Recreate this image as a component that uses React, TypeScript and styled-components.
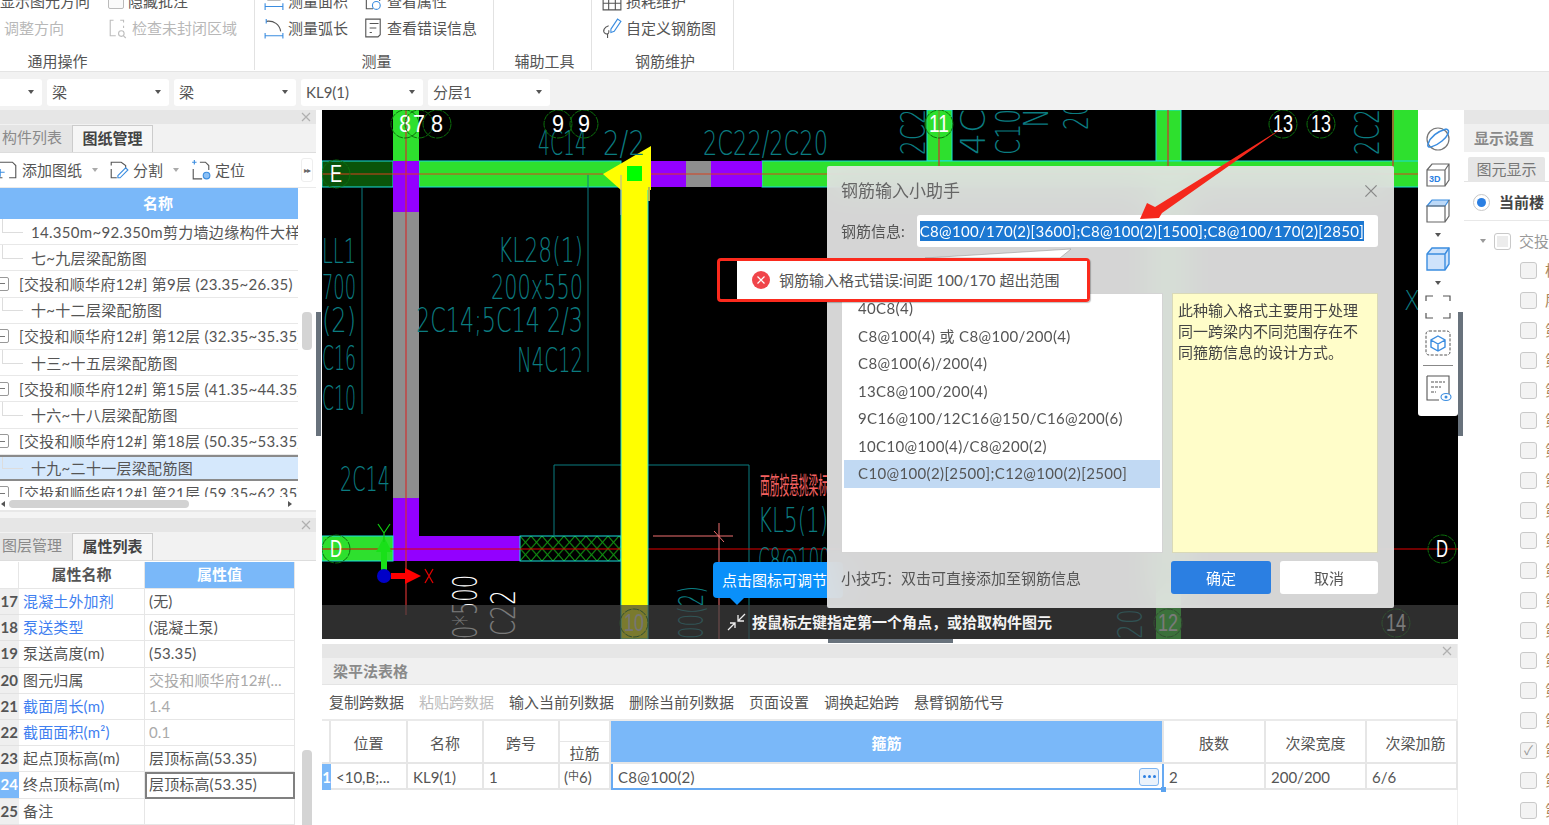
import React from "react";
import styled, { createGlobalStyle } from "styled-components";

const FONT = `"Lato", "Noto Sans CJK SC", "Noto Sans", sans-serif`;
const TEAL = "#0b7c80";
const GREEN = "#2ee02e";
const PURPLE = "#9300ff";
const CYAN = "#19dede";
const BLUE_HEAD = "#7ab8f9";
const LINE = "#e6e6e6";

const Global = createGlobalStyle`
  html, body { margin: 0; padding: 0; background: #f4f4f4; overflow: hidden; }
  * { box-sizing: border-box; }
  body { font: 15px/20px ${FONT}; color: #555; }
`;

const Page = styled.div`
  width: 1549px; height: 825px; overflow: hidden;
  display: flex; flex-direction: column; background: #f4f4f4;
  filter: blur(0.45px);
`;

/* ---------- ribbon ---------- */
const Ribbon = styled.header`
  height: 72px; flex: none; display: flex; background: #fff; overflow: hidden;
  border-bottom: 1px solid #e4e4e4;
`;
const Group = styled.section<{ $w: number }>`
  width: ${p => p.$w}px; flex: none; height: 70px;
  display: flex; flex-direction: column; border-right: 1px solid #e2e2e2;
`;
const GroupBody = styled.div`height: 51px; display: flex; margin-top: -11px; flex: none;`;
const GroupLabel = styled.div<{ $pl?: number; $pr?: number }>`
  height: 20px; margin-top: 11px; text-align: center; line-height: 20px; flex: none;
  padding: 0 ${p => p.$pr ?? 0}px 0 ${p => p.$pl ?? 0}px;
`;
const ToolCol = styled.div<{ $w?: number; $pl?: number }>`
  display: flex; flex-direction: column; gap: 3px; flex: none;
  width: ${p => (p.$w ? `${p.$w}px` : "auto")};
  padding-left: ${p => p.$pl ?? 0}px;
`;
const ToolItem = styled.div<{ $off?: boolean; $pl?: number }>`
  height: 24px; display: flex; align-items: center; gap: 4px; white-space: nowrap;
  color: ${p => (p.$off ? "#b8b8b8" : "#555")};
  padding-left: ${p => p.$pl ?? 0}px;
`;
const IconBox = styled.svg`width: 20px; height: 20px; flex: none; display: block; overflow: visible;`;
const Tick = styled.span`
  width: 16px; height: 16px; flex: none; border: 1px solid #bbb; border-radius: 2px; background: #fafafa;
`;

/* ---------- combo bar ---------- */
const ComboBar = styled.div`height: 38px; flex: none; display: flex; gap: 5px; padding-top: 7px; background: #f2f2f2;`;
const Combo = styled.div<{ $clip?: boolean }>`
  width: 122px; height: 27px; flex: none; background: #fff; border-radius: 3px;
  display: flex; align-items: center; justify-content: space-between; padding: 0 8px 2px 5px;
  margin-left: ${p => (p.$clip ? "-80px" : "0")};
`;
const Caret = styled.i<{ $c?: string; $ml?: number }>`
  width: 0; height: 0; display: block; flex: none;
  border-left: 3px solid transparent; border-right: 3px solid transparent;
  border-top: 4px solid ${p => p.$c ?? "#555"};
  margin-left: ${p => p.$ml ?? 0}px;
`;

/* ---------- main ---------- */
const Main = styled.main`flex: 1; min-height: 0; display: flex;`;
const LeftCol = styled.aside`width: 316px; flex: none; display: flex; flex-direction: column;`;
const Splitter = styled.div`width: 6px; flex: none; background: #fff; padding-top: 202px;`;
const SplitHandle = styled.div`width: 5px; height: 124px; background: #68727c;`;
const Center = styled.div`width: 1136px; flex: none; display: flex; flex-direction: column;`;

const Strip = styled.div`
  height: 14px; flex: none; background: #e6e6e6; display: flex; align-items: center; justify-content: flex-end;
  padding-right: 5px;
`;
const CloseMark = styled.svg`width: 10px; height: 10px; display: block;`;
const Close = ({ c = "#b0b0b0" }: { c?: string }) => (
  <CloseMark viewBox="0 0 10 10"><path d="M1 1l8 8M9 1l-8 8" stroke={c} strokeWidth="1.2" fill="none" /></CloseMark>
);

const TabRow = styled.div`height: 29px; flex: none; display: flex; background: #f2f2f2; border-bottom: 1px solid #ddd; padding-top: 1px;`;
const Tab = styled.div<{ $on?: boolean; $w: number }>`
  width: ${p => p.$w}px; text-align: center; line-height: 25px; flex: none;
  padding-right: ${p => (p.$on ? 0 : 8)}px;
  background: ${p => (p.$on ? "#f6f6f6" : "#e5e5e5")};
  color: ${p => (p.$on ? "#444" : "#8a8a8a")};
  font-weight: ${p => (p.$on ? 700 : 400)};
  border-right: 1px solid #ccc;
  border-top: ${p => (p.$on ? "1px solid #ccc" : "0")};
`;

const TreePanel = styled.section`height: 402px; flex: none; background: #fff; display: flex; flex-direction: column; border-bottom: 2px solid #e8e8e8;`;
const SideTools = styled.div`height: 35px; flex: none; display: flex; align-items: center; border-bottom: 1px solid #eaeaea; position: relative; padding-left: 0; overflow: hidden;`;
const SideTool = styled.div<{ $ml?: number }>`
  display: flex; align-items: center; gap: 4px; margin-left: ${p => p.$ml ?? 0}px; flex: none;
`;
const MoreBtn = styled.div`
  position: absolute; right: 3px; top: 5px; width: 12px; height: 24px; border: 1px solid #eee; border-radius: 3px;
  font-size: 8px; line-height: 22px; text-align: center; color: #666; background: #fff; letter-spacing: -1px;
`;
const TreeBody = styled.div`flex: 1; min-height: 0; display: flex; position: relative;`;
const TreeTable = styled.div`width: 298px; flex: none; overflow: hidden; height: 309px; white-space: nowrap;`;
const TreeHead = styled.div`height: 31px; background: ${BLUE_HEAD}; color: #fff; text-align: center; line-height: 30px; font-weight: 700; padding-left: 18px;`;
const TreeRow = styled.div<{ $sel?: boolean; $child?: boolean }>`
  height: 26.2px; display: flex; align-items: center; overflow: hidden; letter-spacing: .3px;
  border-bottom: ${p => (p.$sel ? "2px solid #8a8a8a" : "1px solid #e8e8e8")};
  border-top: ${p => (p.$sel ? "2px solid #8a8a8a" : "0")};
  background: ${p => (p.$sel ? "#d5e8fc" : "#fff")};
`;
const Expander = styled.span`
  width: 14px; height: 14px; margin-left: -5px; margin-right: 10px; flex: none; border: 1px solid #999; border-radius: 2px;
  background: #fff; position: relative; display: flex; align-items: center; justify-content: flex-end; padding-right: 3px;
  &::after { content: ""; width: 6px; height: 1px; background: #777; display: block; }
`;
const Connector = styled.span`
  width: 21px; height: 14px; margin: -12px 8px 0 2px; flex: none;
  border-left: 1px solid #ddd; border-bottom: 1px solid #ddd;
`;
const VScroll = styled.div<{ $top: number; $h: number }>`
  position: absolute; left: 302px; top: ${p => p.$top}px; width: 10px; height: ${p => p.$h}px;
  background: #d4d4d4; border-radius: 4px;
`;
const HScroll = styled.div`height: 13px; display: flex; align-items: center; padding-left: 1px; flex: none;`;
const HThumb = styled.div`width: 180px; height: 8px; background: #d2d2d2; border-radius: 4px; margin: 0 99px 0 4px;`;
const ArrowL = styled.i`width: 0; height: 0; border: 3px solid transparent; border-left: 0; border-right: 4px solid #555; display: block;`;
const ArrowR = styled.i`width: 0; height: 0; border: 3px solid transparent; border-right: 0; border-left: 4px solid #555; display: block;`;

const Gap = styled.div`height: 6px; flex: none; background: #f4f4f4;`;

const PropPanel = styled.section`flex: 1; min-height: 0; background: #fff; position: relative; display: flex; flex-direction: column; overflow: hidden;`;
const PropGrid = styled.div`display: grid; grid-template-columns: 19px 126px 150px; grid-template-rows: 27px; grid-auto-rows: 26.2px; width: 295px; margin-top: 1px;`;
const PropHead = styled.div<{ $on?: boolean }>`
  text-align: center; line-height: 25px; border-bottom: 1px solid #e6e6e6; border-right: 1px solid #e6e6e6;
  background: ${p => (p.$on ? BLUE_HEAD : "#fff")};
  color: ${p => (p.$on ? "#fff" : "#555")};
  font-weight: 700;
`;
const RowNo = styled.div<{ $on?: boolean }>`
  background: ${p => (p.$on ? BLUE_HEAD : "#efefef")};
  color: ${p => (p.$on ? "#fff" : "#555")};
  border-bottom: 1px solid #e2e2e2; text-align: right; line-height: 25px; padding-right: 1px; overflow: hidden;
  font-weight: 700; white-space: nowrap;
`;
const PropName = styled.div<{ $link?: boolean }>`
  color: ${p => (p.$link ? "#3f7ff0" : "#555")};
  border-bottom: 1px solid #e6e6e6; border-right: 1px solid #e6e6e6; line-height: 25px; padding-left: 4px; white-space: nowrap; letter-spacing: .15px;
`;
const PropVal = styled.div<{ $muted?: boolean; $sel?: boolean }>`
  color: ${p => (p.$muted ? "#aaa" : "#555")};
  border-bottom: 1px solid #e6e6e6; border-right: 1px solid #e6e6e6; line-height: 25px; padding-left: 4px; white-space: nowrap; overflow: hidden; letter-spacing: .15px;
  outline: ${p => (p.$sel ? "2px solid #808080" : "0")}; outline-offset: -2px;
`;

/* ---------- canvas ---------- */
const Canvas = styled.div`height: 529px; flex: none; background: #000; position: relative; overflow: hidden;`;
const Cad = styled.svg`display: block; width: 1136px; height: 529px;`;
const Overlay = styled.svg`position: absolute; left: 0; top: 0; width: 1136px; height: 529px; pointer-events: none;`;
const Tip = styled.div`
  position: absolute; left: 391px; top: 452px; width: 130px; height: 36px; background: #0a90fa; border-radius: 4px;
  color: #fff; line-height: 36px; padding-left: 9px; white-space: nowrap;
  &::after { content: ""; position: absolute; left: 17px; top: 36px; border: 7px solid transparent; border-bottom: 0; border-top-color: #0a90fa; }
`;
const StatusBar = styled.div`
  position: absolute; left: 0; right: 0; bottom: 0; height: 34px; background: rgba(66,66,66,.7);
  display: flex; align-items: center; padding-left: 405px; gap: 5px; color: #f4f4f4; font-weight: 700;
`;
const ToolRail = styled.nav`
  position: absolute; right: 0; top: 0; width: 40px; height: 306px; background: #fff; border-radius: 0 0 3px 3px;
  display: flex; flex-direction: column; align-items: center; gap: 8px; padding-top: 15px;
`;
const RailIcon = styled.svg`width: 28px; height: 28px; display: block; flex: none;`;
const RailSep = styled.hr`width: 30px; height: 1px; margin: 0; border: 0; background: #888; flex: none;`;

const Dialog = styled.div`
  position: absolute; left: 505px; top: 56px; width: 567px; height: 442px;
  background: rgba(229,229,229,.93); backdrop-filter: blur(18px);
  border-radius: 2px; padding: 0 15px 0 14px; display: flex; flex-direction: column; color: #555;
`;
const DialogHead = styled.div`height: 49px; flex: none; display: flex; align-items: center; justify-content: space-between; padding-right: 1px;`;
const DialogTitle = styled.h2`margin: 0; font-size: 17px; font-weight: 400; line-height: 24px; color: #666;`;
const DialogX = styled.svg`width: 14px; height: 14px; display: block;`;
const InfoRow = styled.div`display: flex; align-items: center; height: 32px; flex: none; gap: 12px;`;
const InfoField = styled.div`
  width: 461px; height: 32px; background: #fff; border-radius: 3px; padding-left: 3px; display: flex; align-items: center; flex: none;
`;
const Selected = styled.span`background: #1c78d2; color: #fff; line-height: 20px; white-space: nowrap; letter-spacing: .3px;`;
const DialogBody = styled.div`display: flex; gap: 9px; margin-top: 46px; height: 260px; flex: none;`;
const SampleList = styled.ul`
  list-style: none; margin: 0; padding: 1px 2px; width: 322px; background: #fff; border: 1px solid #d4d4d4; flex: none; overflow: hidden;
`;
const Sample = styled.li<{ $sel?: boolean }>`
  height: 27.5px; line-height: 27px; padding-left: 14px; letter-spacing: .36px; background: ${p => (p.$sel ? "#c1d9f3" : "transparent")};
`;
const Hint = styled.div`
  width: 206px; background: #fffdc9; border: 1px solid #d9d9b8; padding: 6px 5px; line-height: 21px; color: #444; flex: none;
`;
const DialogFoot = styled.div`margin-top: 8px; display: flex; align-items: center; height: 33px; flex: none;`;
const Trick = styled.div`width: 330px; flex: none;`;
const Primary = styled.button`
  width: 100px; height: 33px; border: 0; border-radius: 3px; background: #2b7fe2; color: #fff; font: 15px/20px ${FONT}; padding: 0; flex: none;
`;
const Secondary = styled.button`
  width: 98px; height: 33px; border: 0; border-radius: 3px; background: #fff; color: #555; font: 15px/20px ${FONT}; padding: 0; margin-left: 9px; flex: none;
`;
const Toast = styled.div`
  position: absolute; left: 395px; top: 148px; width: 373px; height: 44px; border: 3px solid #fb2a1d; border-radius: 4px;
  padding-left: 17px; box-shadow: 1px 1px 1px rgba(0,0,0,.25);
`;
const ToastInner = styled.div`
  height: 100%; background: #fff; display: flex; align-items: center; gap: 9px; padding-left: 15px; color: #555; white-space: nowrap;
`;
const ErrDot = styled.svg`width: 18px; height: 18px; flex: none; display: block;`;

/* ---------- bottom table ---------- */
const HSplit = styled.div`height: 5px; flex: none; background: #fff; padding-left: 506px;`;
const HHandle = styled.div`width: 125px; height: 4px; background: #68727c;`;
const Bottom = styled.section`flex: 1; min-height: 0; background: #fff; display: flex; flex-direction: column; border-right: 1px solid #eee;`;
const BottomTitle = styled.div`height: 27px; flex: none; background: #f0f0f0; border-bottom: 1px solid #e4e4e4; line-height: 26px; padding-left: 11px; color: #8a8a8a; font-weight: 700;`;
const BottomTools = styled.div`height: 36px; flex: none; display: flex; gap: 15px; align-items: center; padding-left: 7px; border-bottom: 2px solid #eaeaea;`;
const BottomTool = styled.span<{ $off?: boolean }>`color: ${p => (p.$off ? "#bdbdbd" : "#555")}; white-space: nowrap;`;
const BeamGrid = styled.div`
  display: grid; grid-template-columns: 9px 77px 76px 76px 51px 553px 102px 101px 91px; grid-template-rows: 43px 26px;
`;
const HeadCell = styled.div<{ $on?: boolean; $pl?: number }>`
  display: flex; align-items: center; justify-content: center; padding: 2px 0 0 ${p => p.$pl ?? 0}px;
  border-right: 2px solid ${LINE}; border-bottom: 2px solid ${LINE};
  background: ${p => (p.$on ? BLUE_HEAD : "#fff")}; color: ${p => (p.$on ? "#fff" : "#555")};
  font-weight: ${p => (p.$on ? 700 : 400)};
`;
const SplitHead = styled.div`display: grid; grid-template-rows: 21px 22px; border-right: 2px solid ${LINE}; border-bottom: 2px solid ${LINE};`;
const SplitTop = styled.div`border-bottom: 1px solid ${LINE};`;
const SplitBottom = styled.div`text-align: center; line-height: 22px;`;
const Cell = styled.div<{ $pl?: number }>`
  line-height: 26px; padding-left: ${p => p.$pl ?? 5}px; border-right: 2px solid ${LINE}; border-bottom: 2px solid ${LINE}; white-space: nowrap; overflow: hidden;
`;
const RowMark = styled.div`background: ${BLUE_HEAD}; color: #fff; line-height: 26px; text-align: center; font-weight: 700;`;
const Small = styled.span`font-size: 11px; position: relative; top: -3px;`;
const EditCell = styled.div`
  border-left: 2px solid #68aaf2; border-bottom: 2px solid #68aaf2; border-right: 2px solid #68aaf2; position: relative; letter-spacing: .3px;
  display: flex; align-items: center; justify-content: space-between; padding: 1px 3px 0 5px;
`;
const DotBtn = styled.span`
  width: 20px; height: 18px; border: 1px solid #7db4f0; border-radius: 3px; background: #eaf2fb;
  display: flex; align-items: center; justify-content: center; gap: 2px;
`;
const Dot = styled.i`width: 3px; height: 3px; border-radius: 50%; background: #2b7fe2; display: block;`;
const Grip = styled.i`position: absolute; right: -4px; bottom: -4px; width: 5px; height: 5px; background: #5ba3ef; display: block;`;

/* ---------- right panel ---------- */
const RightCol = styled.aside`flex: 1; min-width: 0; background: #fff; display: flex; flex-direction: column; overflow: hidden; white-space: nowrap;`;
const RightTitle = styled.div`height: 28px; flex: none; background: #f0f0f0; line-height: 28px; padding-left: 10px; color: #8a8a8a; font-weight: 700;`;
const RightTabs = styled.div`height: 30px; flex: none; padding: 5px 0 0 4px; border-bottom: 1px solid #e4e4e4;`;
const RightTab = styled.div`width: 77px; height: 25px; background: #e6e6e6; color: #777; text-align: center; line-height: 25px; border-radius: 2px 2px 0 0;`;
const RadioRow = styled.div`height: 39px; flex: none; display: flex; align-items: center; padding: 2px 0 0 9px; gap: 9px; border-bottom: 1px solid #e8e8e8; color: #444; font-weight: 700;`;
const Radio = styled.span`
  width: 17px; height: 17px; border-radius: 50%; border: 1px solid #c8c8c8; background: #fff; display: flex; align-items: center; justify-content: center; flex: none;
  &::after { content: ""; width: 9px; height: 9px; border-radius: 50%; background: #2b7fe2; }
`;
const RootRow = styled.div`height: 34px; flex: none; display: flex; align-items: center; gap: 8px; padding: 6px 0 0 16px; color: #999;`;
const CheckRow = styled.div`height: 30px; flex: none; display: flex; align-items: center; gap: 8px; padding-left: 56px; color: #a9855c;`;
const Check = styled.span<{ $root?: boolean }>`
  width: 17px; height: 17px; flex: none; border: 1px solid #c9c9c9; border-radius: 3px; background: #f3f3f3;
  display: flex; align-items: center; justify-content: center; color: #999; font-size: 13px; line-height: 14px;
  ${p => p.$root && "box-shadow: inset 0 0 0 2px #fff, inset 0 0 0 8px #ececec;"}
`;

/* ---------- data ---------- */
const treeRows: [string, boolean, boolean?][] = [
  ["14.350m~92.350m剪力墙边缘构件大样", true],
  ["七~九层梁配筋图", true],
  ["[交投和顺华府12#] 第9层 (23.35~26.35)", false],
  ["十~十二层梁配筋图", true],
  ["[交投和顺华府12#] 第12层 (32.35~35.35)", false],
  ["十三~十五层梁配筋图", true],
  ["[交投和顺华府12#] 第15层 (41.35~44.35)", false],
  ["十六~十八层梁配筋图", true],
  ["[交投和顺华府12#] 第18层 (50.35~53.35)", false],
  ["十九~二十一层梁配筋图", true, true],
  ["[交投和顺华府12#] 第21层 (59.35~62.35)", false],
];
const props: { n: string; name: string; val: string; link?: boolean; muted?: boolean }[] = [
  { n: "17", name: "混凝土外加剂", val: "(无)", link: true },
  { n: "18", name: "泵送类型", val: "(混凝土泵)", link: true },
  { n: "19", name: "泵送高度(m)", val: "(53.35)" },
  { n: "20", name: "图元归属", val: "交投和顺华府12#(...", muted: true },
  { n: "21", name: "截面周长(m)", val: "1.4", link: true, muted: true },
  { n: "22", name: "截面面积(m²)", val: "0.1", link: true, muted: true },
  { n: "23", name: "起点顶标高(m)", val: "层顶标高(53.35)" },
  { n: "24", name: "终点顶标高(m)", val: "层顶标高(53.35)" },
  { n: "25", name: "备注", val: "" },
];
const samples = [
  "40C8(4)", "C8@100(4) 或 C8@100/200(4)", "C8@100(6)/200(4)", "13C8@100/200(4)",
  "9C16@100/12C16@150/C16@200(6)", "10C10@100(4)/C8@200(2)", "C10@100(2)[2500];C12@100(2)[2500]",
];
const rightLabels = ["柱", "层", "第", "第", "第", "第", "第", "第", "第", "第", "第", "第", "第", "第", "第", "第", "第", "第", "第"];

/* ---------- cad helpers ---------- */
const CadT = ({ x, y, w, s = 34, c = TEAL, r, children }: { x: number; y: number; w: number; s?: number; c?: string; r?: boolean; children: string }) => (
  <text
    transform={`translate(${x} ${y})${r ? " rotate(-90)" : ""}`}
    textLength={w} lengthAdjust="spacingAndGlyphs" fontSize={s} fill={c}
    fontFamily={`"DejaVu Sans", sans-serif`} fontWeight={200}
  >{children}</text>
);
const Bubble = ({ x, y, t, fill = "none", w }: { x: number; y: number; t: string; fill?: string; w?: string }) => (
  <g>
    <circle cx={x} cy={y} r={14} fill={fill} stroke="#0c6f0c" strokeWidth="1" strokeDasharray="7 1" />
    <text x={x} y={y + 8} textAnchor="middle" fontSize={23} fill={w ?? "#fff"} fontFamily={`"Liberation Sans", sans-serif`}
      textLength={t.length > 1 ? 20 : 12} lengthAdjust="spacingAndGlyphs">{t}</text>
  </g>
);
const B = ({ x, y, w, h, f, s }: { x: number; y: number; w: number; h: number; f: string; s?: string }) => (
  <rect x={x} y={y} width={w} height={h} fill={f} stroke={s ?? "none"} strokeWidth={s ? 1 : 0} />
);

const CadDrawing = () => (
  <Cad viewBox="322 110 1136 529">
    <defs>
      <pattern id="hatch" patternUnits="userSpaceOnUse" width="11" height="12.5" x="520" y="536">
        <path d="M0 0L11 12.5M11 0L0 12.5" stroke="#12a012" strokeWidth="1" fill="none" />
      </pattern>
    </defs>
    <B x={393} y={110} w={26} h={51} f={GREEN} />
    <B x={927} y={110} w={25} h={51} f={GREEN} s={CYAN} />
    <B x={1156} y={110} w={25} h={51} f={GREEN} s={CYAN} />
    <B x={1392} y={110} w={30} h={51} f={GREEN} />
    <B x={1156} y={187} w={25} h={452} f={GREEN} />
    <B x={322} y={161} w={71} h={26} f="#0a540a" s={CYAN} />
    <B x={419} y={161} w={202} h={26} f={GREEN} s={CYAN} />
    <B x={762} y={161} w={662} h={26} f={GREEN} s={CYAN} />
    <B x={650} y={161} w={36} h={26} f={PURPLE} />
    <B x={686} y={161} w={25} h={26} f="#8e8e8e" />
    <B x={711} y={161} w={51} h={26} f={PURPLE} />
    <B x={393} y={161} w={26} h={51} f={PURPLE} />
    <B x={393} y={212} w={26} h={286} f="#8e8e8e" />
    <B x={393} y={498} w={26} h={63} f={PURPLE} />
    <B x={419} y={536} w={101} h={25} f={PURPLE} />
    <B x={322} y={536} w={71} h={25} f={GREEN} s={CYAN} />
    <rect x={520} y={536} width={101} height={25} fill="url(#hatch)" stroke={CYAN} strokeWidth="1" />
    <path d="M554 536V465H621M648 465H749V639M362 187V414M588 175V372" stroke={TEAL} strokeWidth="1" fill="none" />

    <path d="M322 174H603M651 174H1424" stroke="#d8401c" strokeWidth="1" />
    <path d="M406 110V615M939 110V166M1168 110V166M1393 110V166" stroke="#d03030" strokeWidth="1.2" />
    <path d="M322 549H621M648 549H1458" stroke="#e00000" strokeWidth="1.2" />
    <path d="M653 536H733M719 523V639M714 531L724 542" stroke="#f07070" strokeWidth="1" />

    <rect x={621} y={174} width={27} height={465} fill="#ffff00" stroke={CYAN} strokeWidth="1" />
    <path d="M603 174L651 146V190H621Z" fill="#ffff00" />
    <path d="M649 187V201" stroke="#b9b94a" strokeWidth="2" />
    <path d="M621 175V215" stroke="#b0b0b0" strokeWidth="1" />
    <rect x={627} y={166} width={15} height={15} fill="#00ff00" />

    <CadT x={538} y={155} w={49}>4C14</CadT>
    <CadT x={603} y={155} w={42}>2/2</CadT>
    <CadT x={703} y={155} w={125}>2C22/2C20</CadT>
    <CadT x={322} y={263} w={34}>LL1</CadT>
    <CadT x={322} y={299} w={34}>700</CadT>
    <CadT x={322} y={332} w={34}>(2)</CadT>
    <CadT x={322} y={370} w={34}>C16</CadT>
    <CadT x={322} y={410} w={34}>C10</CadT>
    <CadT x={498} y={262} w={85}>KL28(1)</CadT>
    <CadT x={491} y={299} w={92}>200x550</CadT>
    <CadT x={416} y={332} w={167}>2C14;5C14 2/3</CadT>
    <CadT x={517} y={372} w={66}>N4C12</CadT>
    <CadT x={340} y={491} w={50}>2C14</CadT>
    <CadT x={925} y={155} w={46} r>2C2</CadT>
    <CadT x={985} y={155} w={46} r>4C</CadT>
    <CadT x={1020} y={155} w={46} r>C10</CadT>
    <CadT x={1048} y={128} w={20} r>N</CadT>
    <CadT x={1088} y={130} w={28} r>20</CadT>
    <CadT x={1379} y={155} w={46} r>2C2</CadT>
    <CadT x={1404} y={310} w={16} s={26}>X</CadT>
    <CadT x={703} y={639} w={53} r>00(2)</CadT>
    <CadT x={1142} y={639} w={30} r>20</CadT>
    <CadT x={758} y={532} w={70}>KL5(1)</CadT>
    <CadT x={758} y={572} w={72}>C8@100</CadT>
    <text x={760} y={494} fontSize={24} fill="#f46060" textLength={68} lengthAdjust="spacingAndGlyphs" fontFamily={`"Noto Sans CJK SC", sans-serif`}>面筋按悬挑梁标</text>
    <CadT x={477} y={639} w={64} c="#fff" r>0*500</CadT>
    <CadT x={515} y={636} w={46} c="#fff" r>C22</CadT>

    <Bubble x={405} y={124} t="8" />
    <Bubble x={419} y={124} t="7" />
    <Bubble x={437} y={124} t="8" />
    <Bubble x={558} y={124} t="9" />
    <Bubble x={584} y={124} t="9" />
    <Bubble x={939} y={124} t="11" fill="rgba(46,224,46,.55)" />
    <Bubble x={1283} y={124} t="13" />
    <Bubble x={1321} y={124} t="13" />
    <Bubble x={336} y={174} t="E" />
    <Bubble x={336} y={549} t="D" />
    <Bubble x={1442} y={549} t="D" />
    <Bubble x={634} y={623} t="10" w="#eee" />
    <Bubble x={1168} y={623} t="12" />
    <Bubble x={1396} y={623} t="14" />

    <path d="M381 572V552H376L384 537L392 552H387V572Z" fill="#19e019" />
    <path d="M378 524L384 533L390 524M384 533V542" stroke="#10d010" strokeWidth="1.2" fill="none" />
    <path d="M391 573H405V568L421 576L405 584V579H391Z" fill="#ff0000" />
    <circle cx={384} cy={576} r={7} fill="#0000c8" />
    <path d="M425 569L433 583M433 569L425 583" stroke="#e00000" strokeWidth="1.3" />
  </Cad>
);

const App = () => (
  <Page>
    <Global />
    <Ribbon>
      <Group $w={255}>
        <GroupBody>
          <ToolCol $w={108}>
            <ToolItem>显示图元方向</ToolItem>
            <ToolItem $off $pl={4}>调整方向</ToolItem>
          </ToolCol>
          <ToolCol>
            <ToolItem><Tick />隐藏批注</ToolItem>
            <ToolItem $off>
              <IconBox viewBox="0 0 18 18" fill="none" stroke="#bdbdbd">
                <path d="M5 2H2v14h5M11 2h3v2M14 7v2" /><circle cx="12" cy="14" r="2.5" /><path d="M14 16l2 2" />
              </IconBox>
              检查未封闭区域
            </ToolItem>
          </ToolCol>
        </GroupBody>
        <GroupLabel $pr={139}>通用操作</GroupLabel>
      </Group>
      <Group $w={239}>
        <GroupBody>
          <ToolCol $w={108} $pl={9}>
            <ToolItem>
              <IconBox viewBox="0 0 18 18" fill="none" stroke="#3b8de0">
                <path d="M1 4h16M1 14h16M1 11v6M17 11v6" /><path d="M3 8h12" stroke="#666" />
              </IconBox>测量面积
            </ToolItem>
            <ToolItem>
              <IconBox viewBox="0 0 18 18" fill="none" stroke="#555">
                <path d="M2 3c7-1 12 3 13 9" /><path d="M1 16h16M1 13.5v5M17 13.5v5M2 1v4" stroke="#3b8de0" />
              </IconBox>测量弧长
            </ToolItem>
          </ToolCol>
          <ToolCol>
            <ToolItem>
              <IconBox viewBox="0 0 18 18" fill="none" stroke="#555">
                <path d="M3 1h9l3 3v5M3 1v15h6" /><circle cx="12" cy="13" r="3.5" stroke="#3b8de0" />
              </IconBox>查看属性
            </ToolItem>
            <ToolItem>
              <IconBox viewBox="0 0 18 18" fill="none" stroke="#555">
                <path d="M2.5 1h13v14l-2 2H2.5zM6 5h8M6 9h6M6 13h2" />
              </IconBox>查看错误信息
            </ToolItem>
          </ToolCol>
        </GroupBody>
        <GroupLabel $pl={5}>测量</GroupLabel>
      </Group>
      <Group $w={98}>
        <GroupBody />
        <GroupLabel $pl={4}>辅助工具</GroupLabel>
      </Group>
      <Group $w={142}>
        <GroupBody>
          <ToolCol $pl={10}>
            <ToolItem>
              <IconBox viewBox="0 0 18 18" fill="none" stroke="#555">
                <path d="M1 7h16v10H1zM1 11h16M6 7v10M12 7v10" /><path d="M4 7V3h10v4" stroke="#3b8de0" />
              </IconBox>损耗维护
            </ToolItem>
            <ToolItem>
              <IconBox viewBox="0 0 18 18" fill="none" stroke="#555">
                <path d="M6 7C2 8 0 12 3 14c2 1 4 0 3-3M5 14v4" /><path d="M8 10l6-9 3 2-6 9-3 1z" stroke="#3b8de0" />
              </IconBox>自定义钢筋图
            </ToolItem>
          </ToolCol>
        </GroupBody>
        <GroupLabel $pl={5}>钢筋维护</GroupLabel>
      </Group>
    </Ribbon>

    <ComboBar>
      <Combo $clip><span /><Caret /></Combo>
      <Combo>梁<Caret /></Combo>
      <Combo>梁<Caret /></Combo>
      <Combo>KL9(1)<Caret /></Combo>
      <Combo>分层1<Caret /></Combo>
    </ComboBar>

    <Main>
      <LeftCol>
        <TreePanel>
          <Strip><Close /></Strip>
          <TabRow>
            <Tab $w={73}>构件列表</Tab>
            <Tab $w={80} $on>图纸管理</Tab>
          </TabRow>
          <SideTools>
            <SideTool $ml={-2}>
              <IconBox viewBox="0 0 18 18" fill="none" stroke="#555">
                <path d="M1 5V2h12l3 3v11h-6M1 16h3" /><path d="M2 8v7M-1 11h7" stroke="#3b8de0" />
              </IconBox>添加图纸<Caret $c="#aaa" $ml={6} />
            </SideTool>
            <SideTool $ml={11}>
              <IconBox viewBox="0 0 18 18" fill="none" stroke="#555">
                <path d="M2 5V2h9l4 3v3M2 8v8h5" /><path d="M8 14l7-7 2 2-7 7H8z" stroke="#3b8de0" />
              </IconBox>分割<Caret $c="#aaa" $ml={6} />
            </SideTool>
            <SideTool $ml={12}>
              <IconBox viewBox="0 0 18 18" fill="none" stroke="#555">
                <path d="M8 2h5l3 3v4M2 8v9h8" /><path d="M1 2l4 0M3 0v4" stroke="#3b8de0" /><circle cx="14" cy="14" r="3" fill="#8cc0f4" stroke="#3b8de0" />
              </IconBox>定位
            </SideTool>
            <MoreBtn>▸▸</MoreBtn>
          </SideTools>
          <TreeBody>
            <TreeTable>
              <TreeHead>名称</TreeHead>
              {treeRows.map(([t, child, sel]) => (
                <TreeRow key={t} $sel={sel}>
                  {child ? <Connector /> : <Expander />}
                  {t}
                </TreeRow>
              ))}
            </TreeTable>
            <VScroll $top={124} $h={38} />
          </TreeBody>
          <HScroll><ArrowL /><HThumb /><ArrowR /></HScroll>
        </TreePanel>
        <Gap />
        <PropPanel>
          <Strip><Close /></Strip>
          <TabRow>
            <Tab $w={73}>图层管理</Tab>
            <Tab $w={80} $on>属性列表</Tab>
          </TabRow>
          <PropGrid>
            <PropHead />
            <PropHead>属性名称</PropHead>
            <PropHead $on>属性值</PropHead>
            {props.map(p => (
              <React.Fragment key={p.n}>
                <RowNo $on={p.n === "24"}>{p.n}</RowNo>
                <PropName $link={p.link}>{p.name}</PropName>
                <PropVal $muted={p.muted} $sel={p.n === "24"}>{p.val}</PropVal>
              </React.Fragment>
            ))}
          </PropGrid>
          <VScroll $top={232} $h={90} />
        </PropPanel>
      </LeftCol>

      <Splitter><SplitHandle /></Splitter>

      <Center>
        <Canvas>
          <CadDrawing />
          <Tip>点击图标可调节</Tip>
          <StatusBar>
            <IconBox viewBox="0 0 20 20" fill="none" stroke="#eee" strokeWidth="1.3">
              <path d="M1 18L8 11M3 11h5v5M18 2l-7 7M11 3v6h6" />
            </IconBox>
            按鼠标左键指定第一个角点，或拾取构件图元
          </StatusBar>
          <ToolRail>
            <RailIcon viewBox="0 0 28 28" fill="none" stroke="#777" strokeWidth="1.2">
              <circle cx="14" cy="14" r="11" />
              <path d="M4 19C2 25 12 21 18 16S27 5 22 4" stroke="#3b8de0" strokeWidth="1.5" />
              <path d="M4 19c2-6 8-12 18-15" stroke="#3b8de0" strokeWidth="1.5" />
            </RailIcon>
            <RailIcon viewBox="0 0 28 28" fill="none" stroke="#666" strokeWidth="1.2">
              <path d="M3 9h18v16H3zM3 9l5-6h17v16l-4 6M21 9l4-6" />
              <text x="5" y="21" fontSize="9" fontWeight="700" fill="#2b7fe2" stroke="none" fontFamily={`"Liberation Sans", sans-serif`}>3D</text>
            </RailIcon>
            <RailIcon viewBox="0 0 28 28" fill="none" stroke="#666" strokeWidth="1.2">
              <path d="M3 9l5-6h17l-4 6z" fill="#bcd9f8" stroke="#3b8de0" />
              <path d="M3 9h18v16H3zM21 25l4-6V3" />
            </RailIcon>
            <Caret />
            <RailIcon viewBox="0 0 28 28" fill="#cfe3fb" stroke="#3b8de0" strokeWidth="1.4">
              <path d="M3 9l5-6h17v16l-4 6H3z" />
              <path d="M3 9h18v16M21 9l4-6" fill="none" />
            </RailIcon>
            <Caret />
            <RailIcon viewBox="0 0 28 28" fill="none" stroke="#555" strokeWidth="1.2">
              <path d="M2 8V3h7M19 3h7v5M2 20v5h7M19 25h7v-5" />
            </RailIcon>
            <RailIcon viewBox="0 0 28 28" fill="none" stroke="#555" strokeWidth="1">
              <rect x="2" y="2" width="24" height="24" rx="3" strokeDasharray="3 1.5" />
              <path d="M14 7l7 4v7l-7 4-7-4v-7zM7 11l7 4 7-4M14 15v7" stroke="#3b8de0" strokeWidth="1.4" />
            </RailIcon>
            <RailSep />
            <RailIcon viewBox="0 0 28 28" fill="none" stroke="#555" strokeWidth="1.1">
              <path d="M3 2h22v18M3 2v24h12" />
              <path d="M7 8h14M7 13h10M7 18h5" strokeDasharray="3 1" />
              <ellipse cx="22" cy="23" rx="5" ry="3.5" stroke="#3b8de0" />
              <circle cx="22" cy="23" r="1.5" fill="#3b8de0" stroke="none" />
            </RailIcon>
          </ToolRail>
          <Dialog>
            <DialogHead>
              <DialogTitle>钢筋输入小助手</DialogTitle>
              <DialogX viewBox="0 0 10 10">
                <path d="M1 1l8 8M9 1l-8 8" stroke="#888" strokeWidth=".9" fill="none" />
              </DialogX>
            </DialogHead>
            <InfoRow>
              钢筋信息:
              <InfoField>
                <Selected>C8@100/170(2)[3600];C8@100(2)[1500];C8@100/170(2)[2850]</Selected>
              </InfoField>
            </InfoRow>
            <DialogBody>
              <SampleList>
                {samples.map((s, i) => <Sample key={s} $sel={i === 6}>{s}</Sample>)}
              </SampleList>
              <Hint>此种输入格式主要用于处理同一跨梁内不同范围存在不同箍筋信息的设计方式。</Hint>
            </DialogBody>
            <DialogFoot>
              <Trick>小技巧：双击可直接添加至钢筋信息</Trick>
              <Primary>确定</Primary>
              <Secondary>取消</Secondary>
            </DialogFoot>
          </Dialog>
          <Overlay viewBox="322 110 1136 529">
            <path d="M1071 249L925 258H1060Z" fill="#fff" stroke="#999" strokeWidth=".6" />
            <path d="M1284 127L1162 213L1159 218L1140 219L1147 203L1155 207Z" fill="#f5281c" />
          </Overlay>
          <Toast>
            <ToastInner>
              <ErrDot viewBox="0 0 18 18">
                <circle cx="9" cy="9" r="9" fill="#f0454a" />
                <path d="M5.5 5.5l7 7M12.5 5.5l-7 7" stroke="#fff" strokeWidth="1.2" />
              </ErrDot>
              钢筋输入格式错误:间距 100/170 超出范围
            </ToastInner>
          </Toast>
        </Canvas>
        <HSplit><HHandle /></HSplit>
        <Bottom>
          <Strip><Close /></Strip>
          <BottomTitle>梁平法表格</BottomTitle>
          <BottomTools>
            <BottomTool>复制跨数据</BottomTool>
            <BottomTool $off>粘贴跨数据</BottomTool>
            <BottomTool>输入当前列数据</BottomTool>
            <BottomTool>删除当前列数据</BottomTool>
            <BottomTool>页面设置</BottomTool>
            <BottomTool>调换起始跨</BottomTool>
            <BottomTool>悬臂钢筋代号</BottomTool>
          </BottomTools>
          <BeamGrid>
            <HeadCell />
            <HeadCell>位置</HeadCell>
            <HeadCell>名称</HeadCell>
            <HeadCell>跨号</HeadCell>
            <SplitHead><SplitTop /><SplitBottom>拉筋</SplitBottom></SplitHead>
            <HeadCell $on>箍筋</HeadCell>
            <HeadCell>肢数</HeadCell>
            <HeadCell>次梁宽度</HeadCell>
            <HeadCell $pl={8}>次梁加筋</HeadCell>
            <RowMark>1</RowMark>
            <Cell>&lt;10,B;...</Cell>
            <Cell>KL9(1)</Cell>
            <Cell>1</Cell>
            <Cell $pl={4}>(<Small>中</Small>6)</Cell>
            <EditCell>C8@100(2)<DotBtn><Dot /><Dot /><Dot /></DotBtn><Grip /></EditCell>
            <Cell>2</Cell>
            <Cell>200/200</Cell>
            <Cell>6/6</Cell>
          </BeamGrid>
        </Bottom>
      </Center>

      <Splitter><SplitHandle /></Splitter>

      <RightCol>
        <Strip />
        <RightTitle>显示设置</RightTitle>
        <RightTabs><RightTab>图元显示</RightTab></RightTabs>
        <RadioRow><Radio />当前楼</RadioRow>
        <RootRow><Caret $c="#999" /><Check $root />交投和顺</RootRow>
        {rightLabels.map((l, i) => (
          <CheckRow key={i}><Check>{i === 16 ? "✓" : ""}</Check>{l}</CheckRow>
        ))}
      </RightCol>
    </Main>
  </Page>
);

export default App;
